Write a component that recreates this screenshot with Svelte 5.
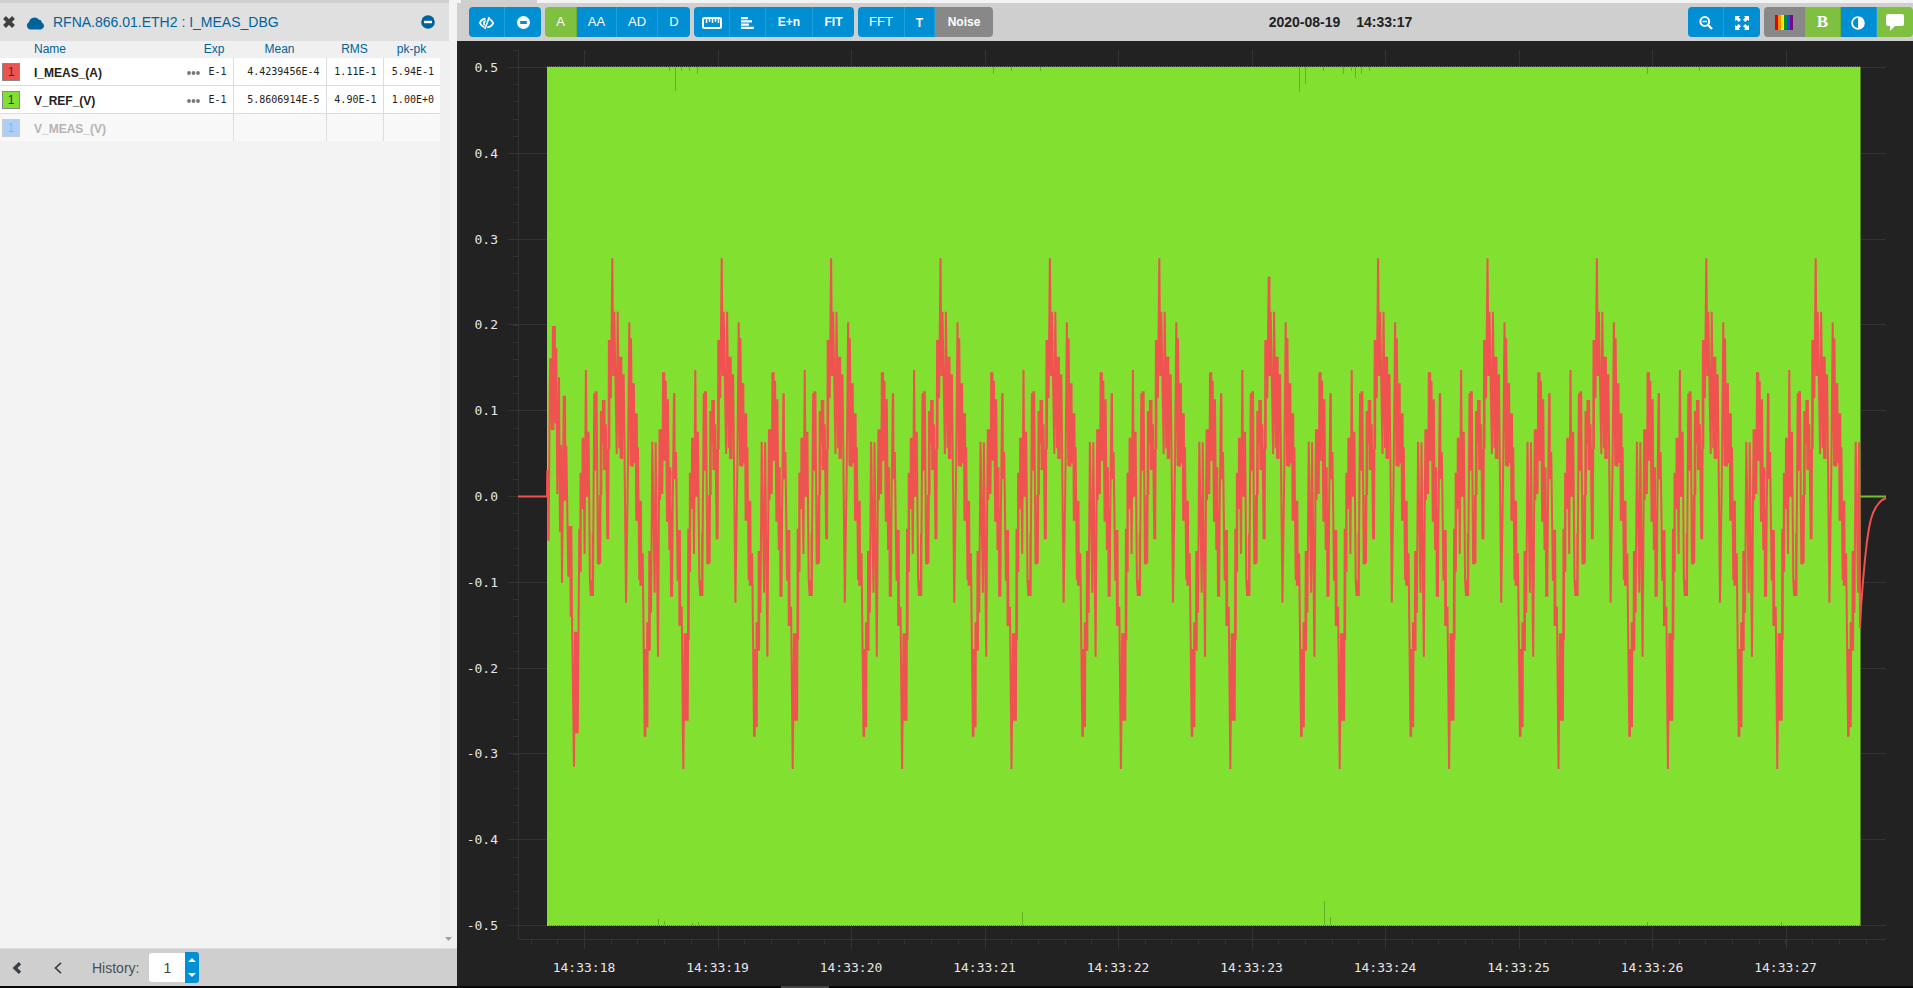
<script>
    let width = $state(0);
    let height = $state(0);
    let history = $state(1);

    const rows = [
        {name: 'I_MEAS_(A)', color: 'red', exp: 'E-1', mean: '4.4239456E-4', rms: '1.11E-1', pkpk: '5.94E-1'},
        {name: 'V_REF_(V)', color: 'green', exp: 'E-1', mean: '5.8606914E-5', rms: '4.90E-1', pkpk: '1.00E+0'},
        {name: 'V_MEAS_(V)', color: 'blue', off: true}
    ];

    const rainbow = ['#e60000', '#ff8c00', '#ffee00', '#0a8a2a', '#1450f0', '#730a80'];

    // plot area inside the chart panel
    const left = 61;
    const top = 9;
    let right = $derived(width - 27);
    let bottom = $derived(height - 47);

    let unitX = $derived((right - left) / 1368);
    let unitY = $derived((bottom - top) / 889);

    const px = (x) => left + x * unitX;
    const py = (y) => top + y * unitY;
    const crisp = (v) => Math.round(v) + 0.5;

    // 0.5 sits 17 units below the top edge, each 0.1 takes 85.8 units
    const levels = Array.from({length: 11}, (_, i) => ({y: 17 + i * 85.8, label: (0.5 - i / 10).toFixed(1).replace('-0.0', '0.0')}));
    const minorY = Array.from({length: 52}, (_, i) => i * 17.16);
    const seconds = Array.from({length: 10}, (_, i) => ({x: 66 + i * 133.5, label: `14:33:${18 + i}`}));
    const minorX = Array.from({length: 51}, (_, i) => 12.6 + i * 26.7);

    // samples in thirds of a unit
    const intro = [
        [21, 740], [24, 660], [26, 872], [29, 420], [34, 325], [37, 540], [42, 228], [46, 520], [49, 295],
        [52, 732], [57, 382], [60, 845], [63, 585], [66, 998], [71, 437], [77, 752], [79, 587], [85, 980],
        [90, 828], [96, 1100], [102, 1550], [105, 1145], [113, 1450], [117, 970]
    ];
    const period = [
        [217, 25], [220, 378], [223, 185], [230, 612], [233, 185], [238, 595], [240, 320], [246, 627], [247, 373],
        [253, 545], [258, 1058], [264, 640], [268, 217], [272, 648], [273, 265], [277, 650], [279, 400], [283, 640],
        [287, 490], [292, 812], [294, 592], [298, 990], [300, 752], [304, 1007], [308, 910], [314, 1460], [317, 1197],
        [321, 1432], [323, 1117], [327, 1202], [330, 903], [333, 1088], [337, 575], [344, 1028], [347, 577],
        [354, 1220], [357, 750], [362, 538], [365, 732], [368, 560], [371, 367], [374, 632], [377, 392], [381, 815],
        [384, 448], [388, 900], [391, 652], [393, 1040], [398, 780], [402, 430], [404, 688], [408, 606], [413, 992],
        [417, 840], [421, 1128], [425, 1070], [430, 1557], [434, 1150], [441, 1412], [444, 1170], [447, 836],
        [449, 965], [451, 668], [455, 777], [458, 563], [462, 912], [466, 360], [469, 740], [474, 545], [478, 990],
        [486, 1038], [488, 850], [491, 430], [494, 662], [498, 424], [502, 942], [506, 940], [510, 735], [513, 483],
        [516, 580], [519, 450], [523, 660], [526, 523], [530, 868], [534, 597], [537, 270], [541, 445]
    ];

    function buildSamples() {
        const out = [...intro];
        for (let n = -1; n < 12; n++) {
            for (const [x, y] of period) {
                if (n === -1 && x < 447) continue;
                if (n === 11 && x > 347) continue;
                out.push([x + n * 328.2, n === 6 && x === 217 ? 80 : y]);
            }
        }
        return out.map(([x, y]) => [x / 3 + 22, y / 3 + 200]);
    }

    // the signal swings several times between close samples
    function addRipple(points) {
        const out = [];
        points.forEach(([x, y], i) => {
            out.push([x, y]);
            const next = points[i + 1];
            if (!next || Math.abs(next[1] - y) > 112) return;
            const step = (next[0] - x) / 3;
            out.push([x + step, next[1]], [x + step * 2, y]);
        });
        return out;
    }

    const samples = addRipple(buildSamples());
    const decay = [
        [1342, 578], [1343, 558], [1345, 531], [1347, 509], [1349, 491], [1351, 478], [1353, 469], [1355, 463],
        [1358, 457], [1361, 453], [1364, 450], [1368, 448]
    ];

    let current = $derived([...samples, ...decay].map(([x, y]) => `${px(x).toFixed(1)},${py(y).toFixed(1)}`).join(' '));

    // x position and length of the spikes on each edge of the reference band
    const topSpikes = [
        [151, 4], [157, 24], [163, 4], [171, 4], [179, 7], [475, 7], [493, 4], [522, 4], [781, 25], [787, 17],
        [805, 4], [825, 7], [833, 4], [837, 11], [843, 7], [851, 4], [1129, 7], [1181, 4]
    ];
    const bottomSpikes = [[140, 6], [146, 4], [174, 2], [180, 3], [504, 13], [806, 24], [812, 8], [1129, 3], [1263, 3]];
</script>

<div class="app">
    <aside class="sidebar">
        <header class="device">
            <button class="plain" aria-label="Close">
                <svg width="12" height="12" viewBox="0 0 12 12"><path d="M1.5 1.5 10.500 10.500M10.500 1.500 1.500 10.500" stroke="#404040" stroke-width="4"/></svg>
            </button>
            <svg class="cloud" width="19" height="13" viewBox="0 0 19 13"><path d="M4.500 12.500A4 4 0 0 1 3 5 5.600 5.600 0 0 1 13 2.800Q15.800 3 15.700 5.600A3.600 3.600 0 0 1 15 12.500Z" fill="#00639c"/></svg>
            <h1>RFNA.866.01.ETH2 : I_MEAS_DBG</h1>
            <button class="plain" aria-label="Collapse">
                <svg width="14" height="14" viewBox="0 0 14 14"><circle cx="7" cy="7" r="6.800" fill="#00639c"/><path d="M3 7h8" stroke="#fff" stroke-width="2.400"/></svg>
            </button>
        </header>

        <div class="list">
            <table>
                <thead>
                    <tr>
                        <th class="swatch-col"></th>
                        <th class="name">Name</th>
                        <th class="exp-col">Exp</th>
                        <th class="mean-col">Mean</th>
                        <th class="stat-col">RMS</th>
                        <th class="stat-col">pk-pk</th>
                    </tr>
                </thead>
                <tbody>
                    {#each rows as row}
                        <tr class:off={row.off}>
                            <td><button class="swatch {row.color}" aria-label="Axis 1, {row.name}">1</button></td>
                            <td class="name">{row.name}</td>
                            <td class="exp">
                                {#if !row.off}
                                    <svg width="13" height="4" viewBox="0 0 13 4" fill="#777"><circle cx="2" cy="2" r="1.900"/><circle cx="6.500" cy="2" r="1.900"/><circle cx="11" cy="2" r="1.900"/></svg>
                                    <span>{row.exp}</span>
                                {/if}
                            </td>
                            <td class="value">{row.mean}</td>
                            <td class="value">{row.rms}</td>
                            <td class="value">{row.pkpk}</td>
                        </tr>
                    {/each}
                </tbody>
            </table>
            <div class="scroll">
                <svg width="7" height="4" viewBox="0 0 7 4"><path d="M0 0h7L3.500 4z" fill="#a0a0a0"/></svg>
            </div>
        </div>

        <footer>
            <button class="plain" aria-label="First">
                <svg width="10" height="12" viewBox="0 0 10 12"><path d="M8 1.200 3 6l5 4.800" fill="none" stroke="#3c4148" stroke-width="3.400"/></svg>
            </button>
            <button class="plain prev" aria-label="Previous">
                <svg width="8" height="12" viewBox="0 0 8 12"><path d="M7 .8 1.500 6 7 11.200" fill="none" stroke="#3c4148" stroke-width="1.700"/></svg>
            </button>
            <label for="history">History:</label>
            <input id="history" type="text" bind:value={history}>
            <div class="spinner">
                <button aria-label="Increase" onclick={() => history++}>
                    <svg width="8" height="4" viewBox="0 0 8 4"><path d="M0 4h8L4 0z" fill="#fff"/></svg>
                </button>
                <button aria-label="Decrease" onclick={() => history--}>
                    <svg width="8" height="4" viewBox="0 0 8 4"><path d="M0 0h8L4 4z" fill="#fff"/></svg>
                </button>
            </div>
        </footer>
    </aside>

    <main>
        <div class="tabs"><div class="tab"></div></div>
        <nav class="toolbar">
            <div class="tools">
                <div class="group">
                    <button class="w36" aria-label="Hide">
                        <svg width="15" height="14" viewBox="0 0 15 14" fill="none" stroke="#fff"><path d="M6.500 2.800C3.500 3 1.700 5 .9 7c.8 2 2.300 3.400 4.300 4M10.500 3.200C12.500 4 13.500 5.500 14.100 7c-.8 2.200-3 4-5.800 4.200" stroke-width="1.900"/><path d="M10.300 1 5.800 13" stroke-width="1.700"/><path d="M6.700 4.800C4.500 5 4.300 8 5.800 9" stroke-width="1.800"/></svg>
                    </button>
                    <button class="w36" aria-label="Remove">
                        <svg width="13" height="13" viewBox="0 0 13 13"><circle cx="6.500" cy="6.500" r="6.500" fill="#fff"/><path d="M3.200 6.500h6.600" stroke="#008fd3" stroke-width="3"/></svg>
                    </button>
                </div>
                <div class="group">
                    <button class="w32 on">A</button>
                    <button class="w40">AA</button>
                    <button class="w41">AD</button>
                    <button class="w32">D</button>
                </div>
                <div class="group">
                    <button class="w36" aria-label="Ruler">
                        <svg width="20" height="12" viewBox="0 0 20 12" fill="none" stroke="#fff"><rect x="1" y="1" width="18" height="10" rx="1.500" stroke-width="2"/><path d="M4.500 1v5M7.500 1v4M10.500 1v5M13.500 1v4M16.500 1v5" stroke-width="1.500"/></svg>
                    </button>
                    <button class="w36" aria-label="Align">
                        <svg width="13" height="12" viewBox="0 0 13 12" stroke="#fff" stroke-width="2.200"><path d="M0 1.100h7M0 4.400h11M0 7.700h8M0 10.900h13"/></svg>
                    </button>
                    <button class="w47 strong">E+n</button>
                    <button class="w41 strong">FIT</button>
                </div>
                <div class="group">
                    <button class="w47">FFT</button>
                    <button class="w30 strong small">T</button>
                    <button class="w58 strong grey">Noise</button>
                </div>
            </div>

            <div class="stamp"><span>2020-08-19</span><span>14:33:17</span></div>

            <div class="tools">
                <div class="group">
                    <button class="w36" aria-label="Zoom out">
                        <svg width="16" height="14" viewBox="0 0 16 14" fill="none" stroke="#fff"><circle cx="7.800" cy="5.500" r="4.400" stroke-width="2"/><path d="M11 9l4 4" stroke-width="2.400"/><path d="M5.500 5.500h4.600" stroke-width="1.500"/></svg>
                    </button>
                    <button class="w36" aria-label="Full screen">
                        <svg width="14" height="14" viewBox="0 0 14 14" fill="#fff"><path d="M0 0h5L3.700 1.400 6 3.700 3.700 6 1.400 3.700 0 5zM14 0v5l-1.400-1.300L10.300 6 8 3.700l2.300-2.300L9 0zM0 14V9l1.400 1.300L3.700 8 6 10.300l-2.300 2.300L5 14zM14 14H9l1.300-1.400L8 10.300 10.300 8l2.300 2.300L14 9z"/></svg>
                    </button>
                </div>
                <div class="group">
                    <button class="w41 grey" aria-label="Colors">
                        <svg width="18" height="15" viewBox="0 0 18 15">
                            {#each rainbow as color, i}
                                <rect x={i * 3} width="3" height="15" fill={color}/>
                            {/each}
                        </svg>
                    </button>
                    <button class="w36 on serif">B</button>
                    <button class="w36" aria-label="Contrast">
                        <svg width="14" height="14" viewBox="0 0 14 14"><circle cx="7" cy="7" r="5.900" fill="none" stroke="#fff" stroke-width="1.800"/><path d="M7 1a6 6 0 0 1 0 12z" fill="#fff"/></svg>
                    </button>
                    <button class="w36 on" aria-label="Comment">
                        <svg width="18" height="17" viewBox="0 0 18 17"><path d="M2 0h14q2 0 2 2v8q0 2-2 2H9l-5 5v-5H2q-2 0-2-2V2q0-2 2-2z" fill="#fff"/></svg>
                    </button>
                </div>
            </div>
        </nav>

        <div class="chart" bind:clientWidth={width} bind:clientHeight={height}>
            {#if width && height}
                <svg {width} {height}>
                    <g class="grid">
                        {#each levels as level}
                            <path d="M{left - 10} {crisp(py(level.y))}H{right}"/>
                        {/each}
                        {#each minorY as y}
                            <path d="M{left - 5} {crisp(py(y))}H{left}"/>
                        {/each}
                        {#each seconds as second}
                            <path d="M{crisp(px(second.x))} {top}V{bottom + 10}"/>
                        {/each}
                        {#each minorX as x}
                            <path d="M{crisp(px(x))} {bottom}v5"/>
                        {/each}
                        <path d="M{left + 0.5} {top}V{bottom + 0.5}H{right}"/>
                    </g>

                    <rect class="band" x={px(29)} y={py(17)} width={px(1342.5) - px(29)} height={py(876) - py(17)}/>
                    <path class="edge" d="M{px(29)} {crisp(py(17)) - 1}H{px(1342)}M{px(31)} {crisp(py(875))}H{px(1342)}"/>
                    {#each topSpikes as [x, length]}
                        <path class="spike" d="M{crisp(px(x))} {py(17)}v{length}"/>
                    {/each}
                    {#each bottomSpikes as [x, length]}
                        <path class="spike" d="M{crisp(px(x))} {py(875)}v{-length}"/>
                    {/each}
                    <path class="reference" d="M{px(1342)} {py(446.5)}H{right}"/>
                    <path class="current" d="M{left} {py(446.5)}H{px(29)}"/>
                    <polyline class="current" points={current}/>

                    {#each levels as level}
                        <text x={left - 20} y={py(level.y) + 5} text-anchor="end">{level.label}</text>
                    {/each}
                    {#each seconds as second}
                        <text x={px(second.x)} y={bottom + 33} text-anchor="middle">{second.label}</text>
                    {/each}
                </svg>
            {/if}
        </div>
    </main>
    <div class="taskbar"><div></div></div>
</div>

<style>
    :global(body) {
        margin: 0;
        background: #222;
    }

    .app {
        display: grid;
        grid-template-columns: 457px 1fr;
        grid-template-rows: 1fr 2px;
        height: 100vh;
        font-family: "Liberation Sans", Arial, sans-serif;
        color: #222;
    }

    button {
        padding: 0;
        border: none;
        font-family: inherit;
        cursor: pointer;
    }

    svg {
        display: block;
    }

    .plain {
        background: none;
    }

    .sidebar {
        display: flex;
        flex-direction: column;
        background: #f3f3f3;
    }

    .device {
        display: flex;
        align-items: center;
        height: 38px;
        margin-right: 8px;
        padding: 0 14px 0 3px;
        border-top: 3px solid #cfcfcf;
        background: #e0e0e0;
    }

    .cloud {
        margin: 2px 8px 0 11px;
    }

    h1 {
        flex: 1;
        margin: 0;
        font-size: 14px;
        font-weight: normal;
        color: #00639c;
    }

    .list {
        flex: 1;
        display: flex;
        align-items: stretch;
    }

    table {
        flex: 1;
        align-self: flex-start;
        table-layout: fixed;
        border-collapse: collapse;
    }

    th {
        height: 17px;
        padding: 0;
        background: #f0f0f0;
        font-size: 12px;
        line-height: 17px;
        font-weight: normal;
        color: #00639c;
    }

    .swatch-col {
        width: 34px;
    }

    .exp-col {
        width: 38px;
        padding-left: 8px;
    }

    .mean-col {
        width: 93px;
    }

    .stat-col {
        width: 57px;
    }

    td {
        height: 27px;
        padding: 0;
        background: #fff;
        border-bottom: 1px solid #ddd;
    }

    .name {
        text-align: left;
    }

    td.name {
        padding-top: 2px;
        height: 25px;
        font-size: 12px;
        font-weight: bold;
    }

    .exp, .value {
        border-right: 1px solid #ddd;
        font-family: "DejaVu Sans Mono", monospace;
        font-size: 10px;
        text-align: right;
    }

    .exp {
        white-space: nowrap;
    }

    .exp svg {
        display: inline-block;
        margin-right: 2px;
    }

    .exp span, .value {
        padding-right: 6px;
    }

    .value:last-child {
        border-right: none;
    }

    .off td {
        background: #f8f8f8;
        border-bottom: none;
        color: #b5b5b5;
    }

    .swatch {
        display: block;
        width: 18px;
        height: 18px;
        margin-left: 2px;
        border: 1px solid #888;
        font-size: 12px;
        line-height: 16px;
        color: #333;
    }

    .red {
        background: #ef5350;
    }

    .green {
        background: #82e030;
    }

    .blue {
        background: #aacff8;
        border-color: #ccc;
        color: #98b4d4;
    }

    .scroll {
        display: flex;
        align-items: flex-end;
        justify-content: center;
        width: 17px;
        padding-bottom: 7px;
        box-sizing: border-box;
        background: #f0f0f0;
    }

    footer {
        display: flex;
        align-items: center;
        height: 37px;
        padding-left: 12px;
        border-top: 1px solid #ddd;
        background: #cfcfcf;
    }

    .prev {
        margin: 0 30px 0 32px;
    }

    label {
        font-size: 14px;
        color: #4a4f57;
    }

    input {
        width: 36px;
        height: 29px;
        margin-left: 10px;
        padding: 0;
        box-sizing: border-box;
        border: none;
        border-radius: 3px 0 0 3px;
        background: #fff;
        font-family: inherit;
        font-size: 14px;
        text-align: center;
        color: #444;
    }

    .spinner {
        display: flex;
        flex-direction: column;
        width: 14px;
        height: 31px;
        border-radius: 0 3px 3px 0;
        background: #008fd3;
    }

    .spinner button {
        flex: 1;
        display: flex;
        align-items: center;
        justify-content: center;
        background: none;
    }

    main {
        display: flex;
        flex-direction: column;
        min-width: 0;
        min-height: 0;
        background: #222;
    }

    .tabs {
        height: 3px;
        background: #f3f3f3;
    }

    .tab {
        width: 76px;
        height: 3px;
        margin-left: 4px;
        background: #cfcfcf;
    }

    .toolbar {
        display: flex;
        align-items: center;
        justify-content: space-between;
        height: 38px;
        padding-left: 12px;
        background: #cfcfcf;
    }

    .tools {
        display: flex;
        gap: 4px;
    }

    .group {
        display: flex;
        overflow: hidden;
        border-radius: 4px;
    }

    .group button {
        display: flex;
        align-items: center;
        justify-content: center;
        height: 30px;
        padding-bottom: 1px;
        box-sizing: border-box;
        background: #008fd3;
        border-right: 1px solid #1f9fdc;
        font-size: 13px;
        color: #fff;
    }

    .group button:last-child {
        border-right: none;
    }

    .group button svg {
        margin-top: 2px;
    }

    .group .on {
        background: #7fc041;
        border-right-color: #72b036;
    }

    .group .grey {
        background: #888;
        border-right-color: #888;
    }

    .group .strong {
        font-size: 12px;
        font-weight: bold;
    }

    .group .small {
        padding-top: 3px;
    }

    .group .serif {
        font-family: "Liberation Serif", serif;
        font-size: 17px;
        font-weight: bold;
    }

    .w30 {
        width: 30px;
    }

    .w32 {
        width: 32px;
    }

    .w36 {
        width: 36px;
    }

    .w40 {
        width: 40px;
    }

    .w41 {
        width: 41px;
    }

    .w47 {
        width: 47px;
    }

    .w58 {
        width: 58px;
    }

    .stamp {
        display: flex;
        gap: 16px;
        font-size: 14px;
        font-weight: bold;
    }

    .chart {
        flex: 1;
        min-height: 0;
        overflow: hidden;
    }

    .chart text {
        font-family: "DejaVu Sans Mono", monospace;
        font-size: 13px;
        fill: #e6e6e6;
    }

    .grid path {
        fill: none;
        stroke: #333;
    }

    .band {
        fill: #82e030;
    }

    .edge {
        stroke: #4b8420;
        stroke-dasharray: 1 1;
    }

    .spike {
        stroke: #62b024;
    }

    .reference {
        stroke: #72c02c;
        stroke-width: 2;
    }

    .current {
        fill: none;
        stroke: #ef5350;
        stroke-width: 2;
        stroke-linejoin: bevel;
    }

    .taskbar {
        grid-column: 1 / -1;
        background: #080808;
    }

    .taskbar div {
        width: 48px;
        height: 2px;
        margin-left: 781px;
        background: #444;
    }
</style>
